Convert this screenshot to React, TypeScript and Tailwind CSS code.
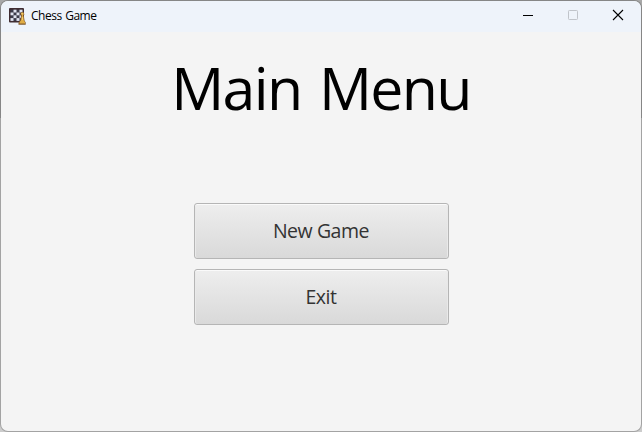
import React from "react";

const FONT = "font-['Segoe_UI','Open_Sans','Noto_Sans',sans-serif]";

function ChessIcon() {
  const squares: [number, number][] = [];
  for (let r = 0; r < 4; r++)
    for (let c = 0; c < 4; c++) if ((r + c) % 2 === 1) squares.push([c, r]);
  return (
    <svg width="17" height="17" viewBox="0 0 17 17" className="mb-px shrink-0">
      <rect x="0" y="0" width="15" height="14.5" rx="1" fill="#3f2c31" />
      <rect x="1.5" y="1.7" width="12" height="11.2" fill="#3b3b4a" />
      {squares.map(([c, r]) => (
        <rect key={`${c}-${r}`} x={1.5 + c * 3} y={1.7 + r * 2.8} width="3" height="2.8" fill="#dfe3f0" />
      ))}
      <path d="M12 4.2h2.4l1 2-.9 1.8.5 1 .5 3.4 1.2 2v2.3H9.5v-2l1.6-2.2.7-3.4.3-1-1-1.8z" fill="#80592c" />
      <path d="M12.3 4.5h1.9l.6 1.4-.9 1.5.4 1.2.5 3.8 1.2 1.5v1.5h-5.5v-1.4l1.5-1.5.7-3.8.3-1.1-.9-1.5z" fill="#e0ad45" />
      <path d="M12.6 5h1v1.3h-1zM12.9 9h.8v3h-.8z" fill="#f8d984" />
    </svg>
  );
}

function MenuButton({ children }: { children: React.ReactNode }) {
  return (
    <button className="h-14 w-[255px] rounded-[3px] border border-[#b5b5b5] bg-linear-to-b from-[#eeeeee] to-[#d9d9d9] text-[19.5px] leading-[54px] tracking-[-0.45px] text-[#333333] shadow-[inset_0_1px_0_#fafafa,inset_1px_0_0_#e9e9e9,inset_-1px_0_0_#e9e9e9]">
      {children}
    </button>
  );
}

export default function App() {
  return (
    <div className={`h-[432px] w-[642px] overflow-hidden bg-linear-to-b from-[#a8a8a8] from-[118px] to-[#cccccc] to-[118px] ${FONT}`}>
      <div className="flex h-full w-full flex-col overflow-hidden rounded-lg border border-black/20 bg-[#f4f4f4] bg-clip-padding">
        <header className="flex h-[31px] shrink-0 items-center bg-[#eef3fa] pl-2">
          <ChessIcon />
          <span className="ml-[5px] pb-px text-xs leading-4 tracking-[-0.5px] [word-spacing:1px] text-black">Chess Game</span>
          <div className="ml-auto flex h-full items-center pb-[3px] text-black">
            <span className="flex w-[45px] justify-center">
              <svg width="12" height="12" viewBox="0 0 12 12" shapeRendering="crispEdges"><path d="M1 6.5h10" stroke="currentColor" /></svg>
            </span>
            <span className="flex w-[45px] justify-center text-[#c0c4ca]">
              <svg width="12" height="12" viewBox="0 0 12 12"><rect x="1.5" y="1.5" width="9" height="9" rx="0.8" fill="none" stroke="currentColor" /></svg>
            </span>
            <span className="flex w-[46px] justify-center">
              <svg width="12" height="12" viewBox="0 0 12 12"><path d="M1 1l10 10M11 1L1 11" stroke="currentColor" strokeWidth="1.1" /></svg>
            </span>
          </div>
        </header>
        <main className="flex flex-1 flex-col items-center pt-[15px]">
          <h1 className="h-20 whitespace-nowrap text-[59px] leading-20 tracking-[-1.7px] [word-spacing:4px] text-black">Main Menu</h1>
          <div className="mt-[76px] flex flex-col gap-2.5">
            <MenuButton>New Game</MenuButton>
            <MenuButton>Exit</MenuButton>
          </div>
        </main>
      </div>
    </div>
  );
}
